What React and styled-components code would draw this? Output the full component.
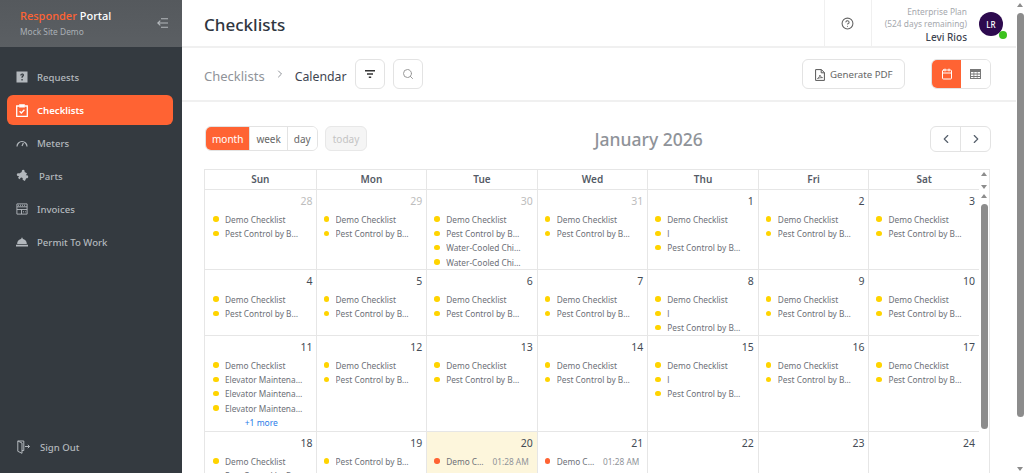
import styled, { createGlobalStyle } from 'styled-components';
import { ChevronLeft, ChevronRight, CircleHelp, Calendar, Search } from 'lucide-react';

const GlobalStyle = createGlobalStyle`
  html, body {
    margin: 0;
    height: 100%;
    overflow: hidden;
    font-family: "Noto Sans", "Open Sans", sans-serif;
    color: #3e4450;
    background: #fff;
  }
  * { box-sizing: border-box; }
`;

const Shell = styled.div`
  display: flex;
  height: 473px;
  overflow: hidden;
`;

const Sidebar = styled.aside`
  width: 182px;
  flex: none;
  display: flex;
  flex-direction: column;
  background: #343a40;
`;

const Brand = styled.div`
  height: 47px;
  padding: 9px 14px 0 20px;
  display: flex;
  justify-content: space-between;
  background: linear-gradient(#55595d, #5b5f63);
`;

const BrandName = styled.div`
  font-size: 11px;
  font-weight: 500;
  line-height: 14px;
  color: #fff;
  span { color: #ff6333; }
`;

const BrandSite = styled.div`
  margin-top: 3px;
  font-size: 8.4px;
  line-height: 12px;
  color: #a9afb5;
`;

const CollapseButton = styled.div`
  display: flex;
  padding-top: 9px;
`;

const NavList = styled.nav`
  flex: 1;
  display: flex;
  flex-direction: column;
  gap: 3px;
  padding: 15px 9px 0 7px;
`;

const NavItem = styled.a`
  height: 30px;
  padding-left: 9px;
  display: flex;
  align-items: center;
  gap: 9px;
  border-radius: 6px;
  font-size: 9.6px;
  font-weight: ${(p) => (p.$active ? 600 : 500)};
  color: ${(p) => (p.$active ? '#fff' : '#b3b8bd')};
  background: ${(p) => (p.$active ? '#ff6333' : 'transparent')};
`;

const SignOut = styled.a`
  height: 20px;
  margin: 0 0 16px 17px;
  display: flex;
  align-items: center;
  gap: 10px;
  font-size: 9.6px;
  font-weight: 500;
  color: #b3b8bd;
`;

const Main = styled.main`
  flex: 1;
  min-width: 0;
  display: flex;
  height: 473px;
  overflow: hidden;
`;

const MainColumn = styled.div`
  flex: 1;
  min-width: 0;
`;

const Rail = styled.div`
  flex: none;
  width: ${(p) => p.$width}px;
  display: flex;
  flex-direction: column;
  align-items: center;
  justify-content: ${(p) => (p.$spread ? 'space-between' : 'flex-start')};
  padding: ${(p) => p.$pad || '0'};
`;

const ArrowUp = styled.span`
  flex: none;
  width: 0;
  height: 0;
  margin: ${(p) => p.$margin || '0'};
  border: 3px solid transparent;
  border-top: 0;
  border-bottom: 4px solid #8c8c8c;
`;

const ArrowDown = styled(ArrowUp)`
  border-bottom: 0;
  border-top: 4px solid #8c8c8c;
`;

const Thumb = styled.div`
  flex: none;
  width: 7px;
  height: ${(p) => p.$height}px;
  border-radius: 4px;
  background: #8c8c8c;
`;

const TopBar = styled.header`
  height: 48px;
  display: flex;
  justify-content: space-between;
  border-bottom: 2px solid #f0f0f0;
`;

const PageTitle = styled.h1`
  margin: 0 0 0 22px;
  font-size: 17px;
  font-weight: 500;
  line-height: 50px;
  color: #2f3640;
`;

const TopActions = styled.div`
  display: flex;
`;

const HelpCell = styled.div`
  width: 48px;
  display: flex;
  align-items: center;
  justify-content: center;
  border-left: 1px solid #f0f0f0;
  border-right: 1px solid #f0f0f0;
  color: #666;
`;

const UserCell = styled.div`
  display: flex;
  align-items: center;
  gap: 12px;
  padding: 2px 13px 0 13px;
`;

const UserText = styled.div`
  margin-top: 2px;
  text-align: right;
  font-size: 8.4px;
  line-height: 12px;
  color: #a5a8ad;
  strong {
    display: block;
    font-size: 10px;
    font-weight: 500;
    line-height: 14px;
    color: #3e4450;
  }
`;

const Avatar = styled.div`
  position: relative;
  width: 24px;
  height: 24px;
  display: flex;
  align-items: center;
  justify-content: center;
  border-radius: 50%;
  background: #2d0a4e;
  color: #fff;
  font-size: 8px;
  font-weight: 500;
  &::after {
    content: '';
    position: absolute;
    right: -4px;
    bottom: -3px;
    width: 8px;
    height: 8px;
    border-radius: 50%;
    background: #3cc21d;
  }
`;

const ToolBar = styled.div`
  height: 54px;
  padding: 0 25px 0 22px;
  display: flex;
  align-items: center;
  border-bottom: 2px solid #f0f0f0;
`;

const Crumb = styled.span`
  margin-top: 4px;
  font-size: ${(p) => (p.$current ? 12.3 : 13)}px;
  color: ${(p) => (p.$current ? '#3e4450' : '#8f9399')};
`;

const CrumbArrow = styled(ChevronRight)`
  margin: 0 9px 0 9px;
  color: #8f9399;
`;

const IconButton = styled.button`
  width: 30px;
  height: 30px;
  margin-left: ${(p) => p.$gap}px;
  padding: 0;
  display: flex;
  align-items: center;
  justify-content: center;
  background: #fff;
  border: 1px solid #e3e3e3;
  border-radius: 6px;
  color: ${(p) => p.$tone};
`;

const PdfButton = styled.button`
  height: 30px;
  width: 103px;
  margin-left: auto;
  padding: 1px 0 0 12px;
  display: flex;
  align-items: center;
  gap: 5px;
  background: #fff;
  border: 1px solid #e3e3e3;
  border-radius: 6px;
  font-family: inherit;
  font-size: 9.7px;
  color: #666;
`;

const ViewSwitch = styled.div`
  height: 30px;
  margin-left: 26px;
  display: flex;
  border: 1px solid #e3e3e3;
  border-radius: 6px;
  overflow: hidden;
`;

const ViewOption = styled.div`
  width: 29px;
  display: flex;
  align-items: center;
  justify-content: center;
  background: ${(p) => (p.$active ? '#ff6333' : '#fff')};
  color: ${(p) => (p.$active ? '#fff' : '#777')};
`;

const Content = styled.section`
  padding: 24px 26px 0 22px;
`;

const CalendarHead = styled.div`
  height: 43px;
  display: flex;
  justify-content: space-between;
  align-items: flex-start;
`;

const HeadLeft = styled.div`
  display: flex;
  gap: 7px;
`;

const Segment = styled.div`
  height: 25px;
  margin-left: 1px;
  display: flex;
  border: 1px solid #e3e3e3;
  border-radius: 6px;
  overflow: hidden;
`;

const SegmentOption = styled.div`
  padding: 0 6px;
  display: flex;
  align-items: center;
  font-size: 10px;
  color: ${(p) => (p.$active ? '#fff' : '#666')};
  background: ${(p) => (p.$active ? '#ff6333' : '#fff')};
  & + & { border-left: 1px solid #e3e3e3; }
`;

const TodayButton = styled.div`
  height: 25px;
  padding: 0 7px;
  display: flex;
  align-items: center;
  border: 1px solid #e8e8e8;
  border-radius: 6px;
  background: #f5f5f5;
  font-size: 10px;
  color: #c4c4c4;
`;

const MonthTitle = styled.h2`
  margin: 0;
  font-size: 17.5px;
  font-weight: 500;
  line-height: 26px;
  color: #8f9399;
`;

const Pager = styled.div`
  height: 26px;
  margin-right: -1px;
  display: flex;
  border: 1px solid #e3e3e3;
  border-radius: 6px;
  color: #56606c;
`;

const PagerButton = styled.div`
  width: 29.5px;
  display: flex;
  align-items: center;
  justify-content: center;
  & + & { border-left: 1px solid #e3e3e3; }
`;

const CalendarFrame = styled.div`
  border: 1px solid #e6e6e6;
  border-bottom: 0;
`;

const HeaderRow = styled.div`
  display: flex;
  height: 20px;
`;

const WeekHeader = styled.div`
  flex: 1;
  min-width: 0;
  display: grid;
  grid-template-columns: repeat(7, minmax(0, 1fr));
  border-bottom: 1px solid #e6e6e6;
`;

const WeekDay = styled.div`
  font-size: 10px;
  font-weight: 600;
  line-height: 18px;
  text-align: center;
  color: #555b66;
  & + & { border-left: 1px solid #e6e6e6; }
`;

const BodyRow = styled.div`
  display: flex;
`;

const MonthBody = styled.div`
  flex: 1;
  min-width: 0;
`;

const Week = styled.div`
  display: grid;
  grid-template-columns: repeat(7, minmax(0, 1fr));
  height: ${(p) => p.$height}px;
  border-bottom: 1px solid #e6e6e6;
`;

const Day = styled.div`
  min-width: 0;
  overflow: hidden;
  padding: 3px 4px 0 7px;
  background: ${(p) => (p.$today ? '#fdf6dc' : '#fff')};
  &:first-child { padding: 3px 3px 0 8px; }
  & + & { border-left: 1px solid #e6e6e6; }
`;

const DayNumber = styled.div`
  height: 19px;
  font-size: 10.5px;
  line-height: 17px;
  text-align: right;
  color: ${(p) => (p.$muted ? '#bdbdbd' : '#444b55')};
`;

const Event = styled.div`
  height: 14.3px;
  display: flex;
  align-items: center;
  padding-right: ${(p) => (p.$late ? 4 : 10)}px;
  font-size: 8.3px;
  color: #6d7077;
  &::before {
    content: '';
    flex: none;
    width: 5.5px;
    height: 5.5px;
    margin-right: 6.5px;
    border-radius: 50%;
    background: ${(p) => (p.$late ? '#ff6333' : '#ffd400')};
  }
`;

const EventName = styled.span`
  flex: 1;
  min-width: 0;
  white-space: nowrap;
  overflow: hidden;
  text-overflow: ellipsis;
`;

const EventTime = styled.span`
  flex: none;
  margin-left: 8px;
  color: #8f9399;
`;

const MoreLink = styled.div`
  padding-right: 3px;
  margin-top: 1px;
  font-size: 8.5px;
  line-height: 14px;
  text-align: center;
  color: #2b7de9;
`;

const HelpBox = () => (
  <svg width="12" height="12" viewBox="0 0 12 12">
    <path fillRule="evenodd" fill="currentColor" d="M.5 .5h11v11H.5zM4.3 4.4h1.3c0-.6.2-.9.5-.9s.5.2.5.6c0 .7-1.2 1-1.2 2.4v.3h1.3v-.2c0-.8 1.3-1.1 1.3-2.6C8 2.9 7.3 2.4 6.2 2.4c-1.2 0-1.9.8-1.9 2zM5.4 8h1.3v1.4H5.4z" />
  </svg>
);

const ClipboardCheck = () => (
  <svg width="12" height="13" viewBox="0 0 12 13" fill="none" stroke="currentColor" strokeWidth="1.3">
    <path d="M3 2H.7v10.3h10.6V2H9" />
    <path fill="currentColor" d="M3.8 .9h4.4v2H3.800z" />
    <path d="M3.6 7.3l1.7 1.7 3.1-3.2" />
  </svg>
);

const MeterArc = () => (
  <svg width="12" height="10" viewBox="0 0 12 10" fill="none" stroke="currentColor" strokeWidth="1.2">
    <path d="M1 8.5a5 5 0 1 1 10 0" />
    <path d="M6 8l1.400-3" />
  </svg>
);

const Puzzle = () => (
  <svg width="14" height="14" viewBox="0 0 14 14">
    <path fill="currentColor" d="M5.8 3C5.4 1.6 6.3.6 7.3.7c1 .1 1.7 1 1.3 2.2l2.4 1.4-1.2 2.1c1-.5 2.2 0 2.4 1 .2 1.1-.8 2.1-2 1.8L8.9 12l-2.3-1.3c.5-1-.1-2-1.1-2.1-1-.1-1.700.8-1.300 1.800L2 9.100l1.200-2C2 7.600.9 6.900.8 5.800.7 4.800 1.800 3.900 3.100 4.500z" />
  </svg>
);

const Invoice = () => (
  <svg width="12" height="12" viewBox="0 0 12 12" fill="none" stroke="currentColor" strokeWidth=".9">
    <path d="M.9 .9h10.2v10.2H.9zM.9 3.8h10.2M.9 6.5h10.2M5.500 6.500v4.600" />
    <path d="M2 2.300h8M7 8.800h2.800" strokeDasharray="1 1" />
  </svg>
);

const Bell = () => (
  <svg width="12" height="10" viewBox="0 0 12 10">
    <path fill="currentColor" d="M1.200 7C1.200 3.800 3.400 2 6 2s4.800 1.800 4.800 5zM5.300 .8h1.400V2.300H5.300zM0 7.800h12v1.700H0z" />
  </svg>
);

const DoorExit = () => (
  <svg width="13" height="14" viewBox="0 0 13 14" fill="none" stroke="currentColor" strokeWidth="1">
    <path d="M5 10.500h1.800V1H.8l4.200 2v10.300L.8 11.300V1" />
    <path d="M8 6.500h4.500M10.800 4.800l1.700 1.700-1.700 1.700" />
  </svg>
);

const CollapseIcon = () => (
  <svg width="11" height="10" viewBox="0 0 11 10" fill="none" stroke="#b4b8bc" strokeWidth="1.1">
    <path d="M4 .8h7M.8 5H11M4 9.200h7M3.300 2.600L.8 5l2.500 2.400" />
  </svg>
);

const FilterBars = () => (
  <svg width="10" height="8" viewBox="0 0 10 8" fill="currentColor">
    <path d="M0 0h10v1.500H0zM2 3.200h6v1.500H2zM3.800 6.400h2.400V8H3.800z" />
  </svg>
);

const PdfFile = () => (
  <svg width="10" height="12" viewBox="0 0 10 12" fill="none" stroke="#555" strokeWidth="1">
    <path d="M.6 .6h5.800l3 3v7.800H.6zM6.200 .6v3.200h3.200" />
    <path d="M2.500 9.500c1.500-1 2.300-2.300 2.400-3.500.4 1.400 1.200 2.300 2.600 2.600-1.700 0-3.500.2-5 .9z" strokeWidth=".8" />
  </svg>
);

const TableGrid = () => (
  <svg width="11" height="10" viewBox="0 0 11 10">
    <path fill="#777" fillRule="evenodd" d="M0 0h11v10H0zM1 3v1.500h2.500V3zM4.300 3v1.500h2.500V3zM7.500 3v1.500H10V3zM1 5.500V7h2.500V5.500zM4.300 5.500V7h2.500V5.500zM7.500 5.500V7H10V5.500zM1 8v1h2.500V8zM4.300 8v1h2.500V8zM7.500 8v1H10V8z" />
  </svg>
);

const base = ['Demo Checklist', 'Pest Control by Building Services'];
const withL = ['Demo Checklist', 'l', 'Pest Control by Building Services'];

const weeks = [
  {
    height: 80,
    days: [
      { n: 28, muted: true, ev: base },
      { n: 29, muted: true, ev: base },
      { n: 30, muted: true, ev: [...base, 'Water-Cooled Chiller Service', 'Water-Cooled Chiller Check'] },
      { n: 31, muted: true, ev: base },
      { n: 1, ev: withL },
      { n: 2, ev: base },
      { n: 3, ev: base },
    ],
  },
  {
    height: 66,
    days: [
      { n: 4, ev: base },
      { n: 5, ev: base },
      { n: 6, ev: base },
      { n: 7, ev: base },
      { n: 8, ev: withL },
      { n: 9, ev: base },
      { n: 10, ev: base },
    ],
  },
  {
    height: 96,
    days: [
      { n: 11, ev: ['Demo Checklist', 'Elevator Maintenance A', 'Elevator Maintenance B', 'Elevator Maintenance C'], more: 1 },
      { n: 12, ev: base },
      { n: 13, ev: base },
      { n: 14, ev: base },
      { n: 15, ev: withL },
      { n: 16, ev: base },
      { n: 17, ev: base },
    ],
  },
  {
    height: 80,
    days: [
      { n: 18, ev: base },
      { n: 19, ev: ['Pest Control by Building Services'] },
      { n: 20, today: true, late: true },
      { n: 21, late: true },
      { n: 22 },
      { n: 23 },
      { n: 24 },
    ],
  },
];

const navItems = [
  ['Requests', <HelpBox />],
  ['Checklists', <ClipboardCheck />, true],
  ['Meters', <MeterArc />],
  ['Parts', <Puzzle />],
  ['Invoices', <Invoice />],
  ['Permit To Work', <Bell />],
];

const App = () => (
  <Shell>
    <GlobalStyle />
    <Sidebar>
      <Brand>
        <div>
          <BrandName><span>Responder</span> Portal</BrandName>
          <BrandSite>Mock Site Demo</BrandSite>
        </div>
        <CollapseButton><CollapseIcon /></CollapseButton>
      </Brand>
      <NavList>
        {navItems.map(([label, icon, active]) => (
          <NavItem key={label} $active={active}>{icon}{label}</NavItem>
        ))}
      </NavList>
      <SignOut><DoorExit />Sign Out</SignOut>
    </Sidebar>
    <Main>
      <MainColumn>
        <TopBar>
          <PageTitle>Checklists</PageTitle>
          <TopActions>
            <HelpCell><CircleHelp size={13} /></HelpCell>
            <UserCell>
              <UserText>
                Enterprise Plan<br />(524 days remaining)
                <strong>Levi Rios</strong>
              </UserText>
              <Avatar>LR</Avatar>
            </UserCell>
          </TopActions>
        </TopBar>
        <ToolBar>
          <Crumb>Checklists</Crumb>
          <CrumbArrow size={12} />
          <Crumb $current>Calendar</Crumb>
          <IconButton $gap={8} $tone="#333"><FilterBars /></IconButton>
          <IconButton $gap={8} $tone="#999"><Search size={12} /></IconButton>
          <PdfButton><PdfFile />Generate PDF</PdfButton>
          <ViewSwitch>
            <ViewOption $active><Calendar size={12} /></ViewOption>
            <ViewOption><TableGrid /></ViewOption>
          </ViewSwitch>
        </ToolBar>
        <Content>
          <CalendarHead>
            <HeadLeft>
              <Segment>
                <SegmentOption $active>month</SegmentOption>
                <SegmentOption>week</SegmentOption>
                <SegmentOption>day</SegmentOption>
              </Segment>
              <TodayButton>today</TodayButton>
            </HeadLeft>
            <MonthTitle>January 2026</MonthTitle>
            <Pager>
              <PagerButton><ChevronLeft size={14} /></PagerButton>
              <PagerButton><ChevronRight size={14} /></PagerButton>
            </Pager>
          </CalendarHead>
          <CalendarFrame>
            <HeaderRow>
              <WeekHeader>
                {['Sun', 'Mon', 'Tue', 'Wed', 'Thu', 'Fri', 'Sat'].map((d) => (
                  <WeekDay key={d}>{d}</WeekDay>
                ))}
              </WeekHeader>
              <Rail $width={10} $spread $pad="2px 0 0">
                <ArrowUp />
                <ArrowDown $margin="0 0 1px" />
              </Rail>
            </HeaderRow>
            <BodyRow>
              <MonthBody>
                {weeks.map((w) => (
                  <Week key={w.days[0].n} $height={w.height}>
                    {w.days.map((d) => (
                      <Day key={d.n} $today={d.today}>
                        <DayNumber $muted={d.muted}>{d.n}</DayNumber>
                        {(d.ev || []).map((e, i) => (
                          <Event key={i}><EventName>{e}</EventName></Event>
                        ))}
                        {d.late && (
                          <Event $late>
                            <EventName>Demo Checklist</EventName>
                            <EventTime>01:28 AM</EventTime>
                          </Event>
                        )}
                        {d.more && <MoreLink>+{d.more} more</MoreLink>}
                      </Day>
                    ))}
                  </Week>
                ))}
              </MonthBody>
              <Rail $width={10} $pad="4px 0 0">
                <ArrowUp $margin="0 0 6px" />
                <Thumb $height={225} />
              </Rail>
            </BodyRow>
          </CalendarFrame>
        </Content>
      </MainColumn>
      <Rail $width={8} $spread $pad="3px 0 2px">
        <ArrowUp $margin="0 0 6px" />
        <Thumb $height={404} />
        <ArrowDown $margin="auto 0 0" />
      </Rail>
    </Main>
  </Shell>
);

export default App;
